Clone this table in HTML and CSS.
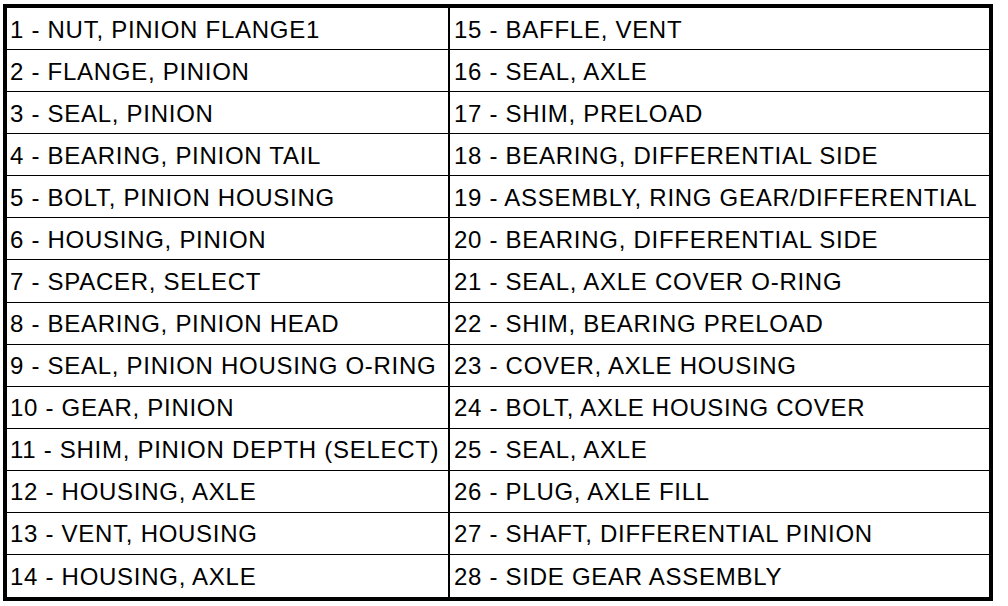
FILE: index.html
```html
<!DOCTYPE html>
<html>
<head>
<meta charset="utf-8">
<link rel="stylesheet" href="styles.css">
</head>
<body>
<div class="parts">
  <div class="cell left">1 - NUT, PINION FLANGE1</div><div class="cell right">15 - BAFFLE, VENT</div>
  <div class="cell left">2 - FLANGE, PINION</div><div class="cell right">16 - SEAL, AXLE</div>
  <div class="cell left">3 - SEAL, PINION</div><div class="cell right">17 - SHIM, PRELOAD</div>
  <div class="cell left">4 - BEARING, PINION TAIL</div><div class="cell right">18 - BEARING, DIFFERENTIAL SIDE</div>
  <div class="cell left">5 - BOLT, PINION HOUSING</div><div class="cell right">19 - ASSEMBLY, RING GEAR/DIFFERENTIAL</div>
  <div class="cell left">6 - HOUSING, PINION</div><div class="cell right">20 - BEARING, DIFFERENTIAL SIDE</div>
  <div class="cell left">7 - SPACER, SELECT</div><div class="cell right">21 - SEAL, AXLE COVER O-RING</div>
  <div class="cell left">8 - BEARING, PINION HEAD</div><div class="cell right">22 - SHIM, BEARING PRELOAD</div>
  <div class="cell left">9 - SEAL, PINION HOUSING O-RING</div><div class="cell right">23 - COVER, AXLE HOUSING</div>
  <div class="cell left">10 - GEAR, PINION</div><div class="cell right">24 - BOLT, AXLE HOUSING COVER</div>
  <div class="cell left">11 - SHIM, PINION DEPTH (SELECT)</div><div class="cell right">25 - SEAL, AXLE</div>
  <div class="cell left">12 - HOUSING, AXLE</div><div class="cell right">26 - PLUG, AXLE FILL</div>
  <div class="cell left">13 - VENT, HOUSING</div><div class="cell right">27 - SHAFT, DIFFERENTIAL PINION</div>
  <div class="cell left last">14 - HOUSING, AXLE</div><div class="cell right last">28 - SIDE GEAR ASSEMBLY</div>
</div>
</body>
</html>
```
FILE: styles.css
```css
html, body {
  margin: 0;
  padding: 0;
  background: #ffffff;
}
body {
  padding: 4px 0 0 3px;
}
.parts {
  box-sizing: border-box;
  width: 990px;
  height: 597px;
  border: 4px solid #000;
  display: grid;
  grid-template-columns: 443px 539px;
  grid-template-rows: repeat(14, 1fr);
  font-family: "Liberation Sans", Arial, sans-serif;
  font-size: 24px;
  letter-spacing: 0.72px;
  color: #000;
}
.cell {
  box-sizing: border-box;
  border-bottom: 1px solid #000;
  display: flex;
  align-items: center;
  padding-left: 3px;
  padding-top: 2px;
  white-space: nowrap;
  line-height: 1;
}
.left {
  border-right: 2px solid #000;
}
.right {
  padding-left: 4px;
}
.last {
  border-bottom: none;
}
```
